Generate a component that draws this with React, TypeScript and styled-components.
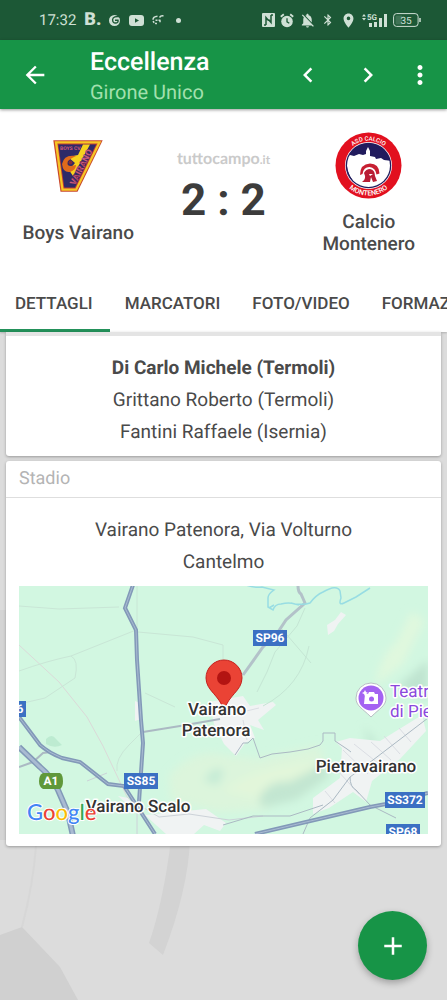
import React from 'react';
import styled, { createGlobalStyle } from 'styled-components';
import {
  MdAdd,
  MdArrowBack,
  MdBluetooth,
  MdChevronLeft,
  MdChevronRight,
  MdLocationOn,
  MdMoreVert,
  MdNotificationsOff,
} from 'react-icons/md';

const GlobalStyle = createGlobalStyle`
  *, *::before, *::after { box-sizing: border-box; }
  body {
    margin: 0;
    background: #dcdcdc;
    color: #4a4a4a;
    font-family: Roboto, "Liberation Sans", sans-serif;
    text-rendering: geometricPrecision;
  }
  button { font: inherit; color: inherit; background: none; border: 0; padding: 0; cursor: pointer; }
  h1, h2, p { margin: 0; }
  svg { display: block; }
`;

const Screen = styled.div`
  position: relative;
  isolation: isolate;
  display: flex;
  flex-direction: column;
  min-height: 100vh;
  overflow: hidden;
`;

const Backdrop = styled.svg`
  position: absolute;
  inset: 0;
  z-index: -1;
  width: 100%;
  height: 100%;
`;

const StatusBar = styled.div`
  display: flex;
  align-items: center;
  justify-content: space-between;
  height: 40px;
  padding: 0 26px 0 39px;
  background: #1c5836;
  color: #cfe0d5;
`;

const StatusGroup = styled.div<{ $gap: number }>`
  display: flex;
  align-items: center;
  gap: ${(p) => p.$gap}px;
`;

const Clock = styled.span`
  font-size: 15px;
  line-height: 20px;
`;

const BoldGlyph = styled.span`
  font-size: 18px;
  font-weight: 900;
  line-height: 20px;
`;

const Dot = styled.span`
  width: 5px;
  height: 5px;
  margin-left: 4px;
  border-radius: 50%;
  background: currentColor;
`;

const AppBar = styled.header`
  position: relative;
  display: flex;
  align-items: center;
  height: 69px;
  padding: 0 5px 0 21px;
  background: #179447;
  color: #fff;
  box-shadow: 0 1px 3px rgba(0, 0, 0, 0.4);
`;

const IconButton = styled.button<{ $width: number }>`
  display: flex;
  align-items: center;
  justify-content: center;
  width: ${(p) => p.$width}px;
  height: 48px;
`;

const Titles = styled.div`
  flex: 1;
  padding: 5px 0 0 41px;
`;

const Title = styled.h1`
  font-size: 25px;
  font-weight: 500;
  line-height: 30px;
`;

const Subtitle = styled.p`
  font-size: 20px;
  line-height: 28px;
  color: #a2e0ae;
`;

const Panel = styled.section`
  background: #fff;
  box-shadow: 0 1px 2px rgba(0, 0, 0, 0.2);
`;

const Match = styled.div`
  display: grid;
  grid-template-columns: 1fr 134px 1fr;
  padding: 23px 0 19px;
`;

const Team = styled.div`
  display: flex;
  flex-direction: column;
  align-items: center;
  gap: 12px;
`;

const Crest = styled.div`
  display: flex;
  align-items: center;
  height: 67px;
`;

const TeamName = styled.h2`
  display: flex;
  align-items: center;
  max-width: 120px;
  min-height: 44px;
  font-size: 19px;
  font-weight: 500;
  line-height: 22px;
  text-align: center;
`;

const Result = styled.div`
  display: flex;
  flex-direction: column;
  align-items: center;
  padding-top: 17px;
`;

const Brand = styled.span`
  font-family: Lato, sans-serif;
  font-size: 16px;
  font-weight: 700;
  line-height: 20px;
  color: #cacaca;
`;

const BrandSuffix = styled.span`
  font-size: 12px;
`;

const Score = styled.strong`
  font-size: 44px;
  font-weight: 700;
  line-height: 60px;
  color: #3c3c3c;
`;

const Tabs = styled.div`
  display: flex;
  height: 58px;
  overflow: hidden;
`;

const Tab = styled.button<{ $active?: boolean }>`
  flex: none;
  padding: 0 17px 0 15px;
  border-top: 3px solid transparent;
  border-bottom: 3px solid ${(p) => (p.$active ? '#23915a' : 'transparent')};
  font-size: 17px;
  font-weight: 500;
`;

const Content = styled.main`
  display: flex;
  flex-direction: column;
  gap: 5px;
  padding: 0 6px;
`;

const Card = styled.section<{ $continued?: boolean }>`
  background: #fff;
  border-top: ${(p) => (p.$continued ? '4px solid #e4e4e4' : '0')};
  border-radius: ${(p) => (p.$continued ? '0 0 3px 3px' : '3px')};
  box-shadow: 0 1px 3px rgba(0, 0, 0, 0.3);
`;

const CardTitle = styled.h2`
  padding: 0 13px;
  border-bottom: 1px solid #dedede;
  font-size: 18px;
  font-weight: 400;
  line-height: 36px;
  color: #b4b4b4;
`;

const Lines = styled.div`
  display: flex;
  flex-direction: column;
  align-items: center;
  padding: 16px 60px 8px;
`;

const Line = styled.p<{ $strong?: boolean }>`
  font-size: 19px;
  font-weight: ${(p) => (p.$strong ? 700 : 400)};
  line-height: 32px;
  text-align: center;
`;

const MapFrame = styled.div`
  padding: 0 13px 12px;
`;

const MapDrawing = styled.svg`
  width: 100%;
  height: 248px;
  font-family: Roboto, sans-serif;
`;

const Fab = styled.button`
  position: fixed;
  right: 20px;
  bottom: 20px;
  display: flex;
  align-items: center;
  justify-content: center;
  width: 69px;
  height: 69px;
  border-radius: 50%;
  box-shadow: 0 3px 7px rgba(0, 0, 0, 0.28);

  && { background: #179447; color: #fff; }
`;

const NfcIcon = () => (
  <svg width="13" height="14" viewBox="0 0 13 14" fill="none">
    <rect width="13" height="14" rx="1" fill="currentColor" />
    <path d="M4 12V4.500L6.500 7.500M9 2v7.500L6.500 6.500M2 12h2M9 2h2" stroke="#1c5836" strokeWidth="1.500" />
  </svg>
);

const AlarmIcon = () => (
  <svg width="14" height="15" viewBox="0 0 14 15" fill="none">
    <circle cx="7" cy="8.500" r="5.800" fill="currentColor" />
    <path d="M.8 3.800 3.800 1.200M13.200 3.800l-3-2.600" stroke="currentColor" strokeWidth="1.800" />
    <path d="M7 5.200v3.600l2.300 1.500" stroke="#1c5836" strokeWidth="1.300" />
  </svg>
);

const SignalIcon = () => (
  <svg width="26" height="16" viewBox="0 0 26 16" fill="currentColor">
    <path d="M0 4.500 2 2l2 2.500zM0 6l2 2.500L4 6zM7 11h3v4H7zM12 10h3v5h-3zM17 6h3v9h-3zM22 2h3v13h-3z" />
    <text x="5" y="8" fontSize="8" fontWeight="700">5G</text>
  </svg>
);

const BatteryIcon = () => (
  <svg width="28" height="14" viewBox="0 0 28 14" fill="none">
    <rect x=".6" y=".6" width="24.500" height="12.800" rx="3" stroke="currentColor" />
    <path d="M2.500 3.500q0-1 1-1H9v9H3.500q-1 0-1-1z" fill="#3f7355" />
    <path d="M27 5v4" stroke="currentColor" strokeWidth="1.500" />
    <text x="13" y="10.500" fontSize="10" textAnchor="middle" fill="currentColor">35</text>
  </svg>
);

const SwirlIcon = () => (
  <svg width="12" height="13" viewBox="0 0 12 13" fill="none">
    <circle cx="5.500" cy="6.500" r="5.500" fill="currentColor" />
    <path d="M12 2.800Q4 1.500 3.600 5.500q0 4 3.400 3.500 2.500-.5 2-2.800H6" stroke="#1c5836" strokeWidth="1.400" />
  </svg>
);

const YoutubeIcon = () => (
  <svg width="15" height="11" viewBox="0 0 15 11">
    <rect width="15" height="11" rx="3" fill="currentColor" />
    <path d="M6 3.200v4.600l4-2.300z" fill="#1c5836" />
  </svg>
);

const DashedIcon = () => (
  <svg width="12" height="10" viewBox="0 0 12 10" fill="none" stroke="currentColor" strokeWidth="1.500">
    <path d="M11.500 1Q9 .3 7.500 2.500M5.500 1.200Q1 1.500 1 4.800" />
    <path d="M1.200 6Q2 9 6 8.500M3.500 5.200h6M8 5.200v3" strokeDasharray="2 1" />
  </svg>
);

const VairanoCrest = () => (
  <svg width="50" height="52" viewBox="0 0 50 52" role="img" aria-label="Boys Vairano">
    <path d="M.3.300h49.400L24.500 51.700h-17z" fill="#c9472b" />
    <path d="M1.700 1.300h46.600L23.800 50.700H8.500z" fill="#f6c725" />
    <path d="M4.400 3.600h40.200L22.500 48.400h-12z" fill="#c23a35" />
    <path d="M5.300 4.500h37.800L21.900 47.500H11.300z" fill="#2d2a68" />
    <path d="M30 4.500h7L20 36l-4-6 6-7-7-6 10-2z" fill="#f7d21e" />
    <path d="M23 16q-12-2-14 8 1 9 8 8 6-2 6-7l-5 1q-5 0-3-5 3-3 8-5z" fill="#e06a1b" />
    <circle cx="17.500" cy="22.500" r="2" fill="#7c2a3c" />
    <text x="7" y="10" fontSize="5" fontWeight="700" fill="#d75a7a">BOYS CV</text>
    <text transform="translate(22 46) rotate(-63)" fontSize="9" fontWeight="900" fill="#cc5f83" stroke="#7c2448" strokeWidth=".3">VAIRANO</text>
  </svg>
);

const MonteneroCrest = () => (
  <svg width="67" height="67" viewBox="0 0 67 67" role="img" aria-label="Calcio Montenero">
    <defs>
      <path id="arc-top" d="M8.500 33.500a25 25 0 0 1 50 0" />
      <path id="arc-bottom" d="M3.500 33.500a30 30 0 0 0 60 0" />
      <clipPath id="disc"><circle cx="33.500" cy="33.500" r="21.500" /></clipPath>
    </defs>
    <circle cx="33.500" cy="33.500" r="33" fill="#e2101f" />
    <circle cx="33.500" cy="33.500" r="23.500" fill="#fff" />
    <circle cx="33.500" cy="33.500" r="22.800" fill="#211b5d" />
    <g clipPath="url(#disc)">
      <path d="M10 25l5-2 4 1 5-2 4 1 3-1v-3l2-4 2 4v5l5 1 1 2 5-1 3 2 9 1-2 14q-5 13-20 14-18-1-23-18z" fill="#fff" />
    </g>
    <path d="M25 43q0-11 10-11.500 9 0 9.500 10l-3 1q-1-7-7-7.500-6 0-7 7z" fill="#c71f32" />
    <path d="M29 41q2-4 6-4 5 1 5 7l2 5-4 1-2-5-1 5h-8q5-3 2-9z" fill="#b91d35" />
    <path d="M34 42h4l-3 2z" fill="#fff" />
    <text fontSize="6" fontWeight="500" fill="#fff" textAnchor="middle">
      <textPath href="#arc-top" startOffset="50%">ASD CALCIO</textPath>
    </text>
    <text fontSize="7" fontWeight="500" fill="#fff" textAnchor="middle">
      <textPath href="#arc-bottom" startOffset="50%">MONTENERO</textPath>
    </text>
  </svg>
);

const roadSigns = [
  { label: 'SP96', x: 234, y: 44, w: 34 },
  { label: 'SS85', x: 105, y: 187, w: 34 },
  { label: 'SS372', x: 366, y: 206, w: 40 },
  { label: 'SP68', x: 367, y: 238, w: 34 },
  { label: '6', x: -11, y: 115, w: 18, tx: 1 },
];

const places = [
  { label: 'Vairano', x: 198, y: 129 },
  { label: 'Patenora', x: 197, y: 150 },
  { label: 'Vairano Scalo', x: 119, y: 226 },
  { label: 'Pietravairano', x: 347, y: 186 },
];

const mainRoads = [
  'M114-1 106 22 117 44 118 74 122 134 124 157 120 216',
  'M0 131 21 159Q30 167 43 172L61 176 89 198 105 200 114 214 136 248',
  'M236 248 287 236 351 221 367 218 409 207',
];

const googleLetters: [string, string][] = [
  ['G', '#4285f4'], ['o', '#ea4335'], ['o', '#fbbc05'], ['g', '#4285f4'], ['l', '#34a853'], ['e', '#ea4335'],
];

const StadiumMap = () => (
  <MapDrawing viewBox="0 0 409 248" preserveAspectRatio="xMidYMid slice" role="img" aria-label="Mappa dello stadio">
    <defs>
      <filter id="soft" x="-20%" y="-20%" width="140%" height="140%"><feGaussianBlur stdDeviation="4" /></filter>
    </defs>
    <rect width="409" height="248" fill="#d2f7e1" />
    <g filter="url(#soft)">
      <path d="M150 190q25-30 60-20l30 3 60-14 8 20-60 45-50 2-46-12z" fill="#dcf5dc" />
      <path d="M204 205q30-25 90-30l10 10-60 28z" fill="#e2f6da" />
      <path d="M240 212q10-18 30-16l35-18 6 12-34 24-34 8z" fill="#c3e6d1" />
      <path d="M185 195q10-18 20-10l-6 14z" fill="#c5ebd6" />
      <path d="M392 26l14 8-22 44-28 22q5-30 22-45z" fill="#e0f8de" />
      <path d="M409 74l-30 26 30 14z" fill="#bfe4d0" />
      <path d="M345 140l15 18-12 4z" fill="#c5ead5" />
    </g>
    <path d="M27 153q6-6 10 0l6 6q-8 4-16-1z" fill="#bdebd1" />
    <g fill="#f0f3f3">
      <path d="M190 116l34-6 7 10 23-4 3 3-18 15 6 10-14-5 5 13-10 5-9 13-12-12-10-20z" />
      <path d="M294 212l27-20 2-30-6-6 14-4 30 3 42-26 4 16-26 28-28 22-6 21-13-10-24 16-16 6z" />
      <path d="M308 39l8-5 6-8 5 3-8 9-4 7-6 4z" />
      <path d="M99 210l10 2 6 9 12 8 60-6 20 14-6 8-16-6-10 9h-28l-20-18-8-2zM116 115l5 2 1 16-6 2z" />
    </g>
    <g fill="none" stroke="#dcdfe2" strokeWidth="1">
      <path d="M0 59 40 96 68 131 84 160 108 211 118 218" stroke="#dbd9d8" />
      <path d="M0 85q28-10 52-15l30-12 35-14M52 70q8 4 4 22l-30 20-26 6M0 20l40 3 60-2M119 46l55 5 30 8v30M118 0v44M126 107l30 14M98 185q-2-12 12-26l14-14" stroke="#c9e6d6" />
      <path d="M286 22l-8 18-22 26-8 20-10 20M290 60q-8 40-46 60M262 42l30 35" stroke="#c5e6d4" />
      <path d="M324 164l25 24M335 158l30 24M352 156l20 18M365 150l16 18M318 184l22 24M380 142l12 14M306 205l10 12M224 134l4 20M215 128l25-6" stroke="#dadde3" />
      <path d="M102 199l16 19v30M68 195l20-8M120 219l20 12 30-3 40 6 34-4" stroke="#ccd2d8" />
    </g>
    <g fill="none" stroke="#abb9c3" strokeWidth="2">
      <path d="M216 169l8-12 5 0 5-5 7 20 12-4 18-2 18-3 12-4 3-4 0-8 12 0 0 8 12 8 4 3" strokeWidth="1" />
      <path d="M284 248l7-16 23-18 17-23 23-17 55-42" strokeWidth="1" />
      <path d="M204 239l30-9 37 0 33-11M331 191q0 10 6 13l14 15 26 13" strokeWidth="1" />
      <path d="M0 181l14-5 10-9 8-1M124 146l37-6 40-7" strokeWidth="2" />
      <path d="M279 0q0 6 3 8l4 9-19 17-8 12-15 15-20 28" strokeWidth="3" stroke="#b3c2c9" />
    </g>
    <path d="M227-1q8 3 16 2l12 3q-6 4-6 8l0 9 5 3q2-6 8-6 8-2 14 0 10 1 15-1 6-8 13-11 14-8 17-1l1 7q-3 8 3 5l12-6 14-9M255 19l-5 3M280 19l-8-2" fill="none" stroke="#98dde3" strokeWidth="1.500" />
    {mainRoads.map((d) => (
      <g key={d} fill="none">
        <path d={d} stroke="#8299b8" strokeWidth="4" />
        <path d={d} stroke="#a9bbd2" strokeWidth="1" />
      </g>
    ))}
    <path d="M0 161 21 181Q32 190 39 204L49 227 54 250" fill="none" stroke="#8299b8" strokeWidth="6" />
    <path d="M0 161 21 181Q32 190 39 204L49 227 54 250" fill="none" stroke="#a9bbd2" strokeWidth="3" />

    {roadSigns.map((s) => (
      <g key={s.label}>
        <rect x={s.x} y={s.y} width={s.w} height="16" fill="#3b70c3" />
        <text x={s.tx ?? s.x + s.w / 2} y={s.y + 12} fontSize="12" fontWeight="700" textAnchor="middle" fill="#fff">{s.label}</text>
      </g>
    ))}
    <path d="M24 187h17q3 2 3 8t-3 8H24q-4-2-4-8t4-8z" fill="#60983a" />
    <text x="32" y="199" fontSize="12" fontWeight="700" textAnchor="middle" fill="#fff">A1</text>

    <path d="M205 74a18 18 0 0 1 18 18c0 13-14 17-18 33-4-16-18-20-18-33a18 18 0 0 1 18-18z" fill="#ea4335" stroke="#c5221f" strokeWidth="1" />
    <circle cx="205" cy="92" r="7" fill="#b31412" />

    <g fontSize="17" fontWeight="500" fill="#333" stroke="#fff" strokeWidth="3" strokeLinejoin="round" paintOrder="stroke" textAnchor="middle">
      {places.map((p) => (
        <text key={p.label} x={p.x} y={p.y}>{p.label}</text>
      ))}
    </g>

    <path d="M352 97a15 15 0 0 1 15 15c0 8-6 10-15 19-9-9-15-11-15-19a15 15 0 0 1 15-15z" fill="#fff" stroke="#b9bfc4" strokeWidth="1" />
    <circle cx="352" cy="112" r="12.500" fill="#a463f2" />
    <path d="M346 108h3l1-2h5l1 2h3v10h-14z" fill="#fff" />
    <circle cx="352.500" cy="113" r="2.500" fill="#a463f2" />
    <path d="M346 104l1 2 2 1-2 1-1 2-1-2-2-1 2-1z" fill="#fff" />
    <g fontSize="17" fill="#8b48dc" stroke="#fff" strokeWidth="3" strokeLinejoin="round" paintOrder="stroke">
      <text x="371" y="111">Teatro</text>
      <text x="371" y="131">di Pietra</text>
    </g>

    <text x="8" y="234" fontSize="22" fontFamily="Lato, sans-serif" fontWeight="500" stroke="#fff" strokeWidth="2" paintOrder="stroke">
      {googleLetters.map(([char, color], i) => (
        <tspan key={i} fill={color}>{char}</tspan>
      ))}
    </text>
  </MapDrawing>
);

export default function App() {
  return (
    <Screen>
      <GlobalStyle />
      <Backdrop viewBox="0 0 447 1000" preserveAspectRatio="xMidYMax slice" aria-hidden="true">
        <rect width="447" height="1000" fill="#dcdcdc" />
        <path d="M171 840h19q-2 50-27 115l-14-12q14-40 22-103z" fill="#d3d3d3" />
        <path d="M0 935l22-8 38 40 18 33H0z" fill="#d0d0d0" />
        <path d="M36 846q-3 40-14 81" fill="none" stroke="#d7d7d7" strokeWidth="2" />
        <path d="M0 610h8v230H0z" fill="#d4d4d4" />
      </Backdrop>

      <StatusBar>
        <StatusGroup $gap={8}>
          <Clock>17:32</Clock>
          <BoldGlyph>B.</BoldGlyph>
          <SwirlIcon />
          <YoutubeIcon />
          <DashedIcon />
          <Dot />
        </StatusGroup>
        <StatusGroup $gap={5}>
          <NfcIcon />
          <AlarmIcon />
          <MdNotificationsOff size={17} />
          <MdBluetooth size={14} />
          <MdLocationOn size={17} />
          <SignalIcon />
          <BatteryIcon />
        </StatusGroup>
      </StatusBar>

      <AppBar>
        <IconButton $width={28} aria-label="Indietro"><MdArrowBack size={28} /></IconButton>
        <Titles>
          <Title>Eccellenza</Title>
          <Subtitle>Girone Unico</Subtitle>
        </Titles>
        <IconButton $width={60} aria-label="Precedente"><MdChevronLeft size={30} /></IconButton>
        <IconButton $width={60} aria-label="Successiva"><MdChevronRight size={30} /></IconButton>
        <IconButton $width={44} aria-label="Altre opzioni"><MdMoreVert size={30} /></IconButton>
      </AppBar>

      <Panel>
        <Match>
          <Team>
            <Crest><VairanoCrest /></Crest>
            <TeamName>Boys Vairano</TeamName>
          </Team>
          <Result>
            <Brand>tuttocampo<BrandSuffix>.it</BrandSuffix></Brand>
            <Score>2 : 2</Score>
          </Result>
          <Team>
            <Crest><MonteneroCrest /></Crest>
            <TeamName>Calcio Montenero</TeamName>
          </Team>
        </Match>
        <Tabs role="tablist">
          <Tab role="tab" aria-selected $active>DETTAGLI</Tab>
          <Tab role="tab" aria-selected={false}>MARCATORI</Tab>
          <Tab role="tab" aria-selected={false}>FOTO/VIDEO</Tab>
          <Tab role="tab" aria-selected={false}>FORMAZIONI</Tab>
        </Tabs>
      </Panel>

      <Content>
        <Card $continued>
          <Lines>
            <Line $strong>Di Carlo Michele (Termoli)</Line>
            <Line>Grittano Roberto (Termoli)</Line>
            <Line>Fantini Raffaele (Isernia)</Line>
          </Lines>
        </Card>
        <Card>
          <CardTitle>Stadio</CardTitle>
          <Lines>
            <Line>Vairano Patenora, Via Volturno Cantelmo</Line>
          </Lines>
          <MapFrame><StadiumMap /></MapFrame>
        </Card>
      </Content>

      <Fab aria-label="Aggiungi"><MdAdd size={30} /></Fab>
    </Screen>
  );
}
